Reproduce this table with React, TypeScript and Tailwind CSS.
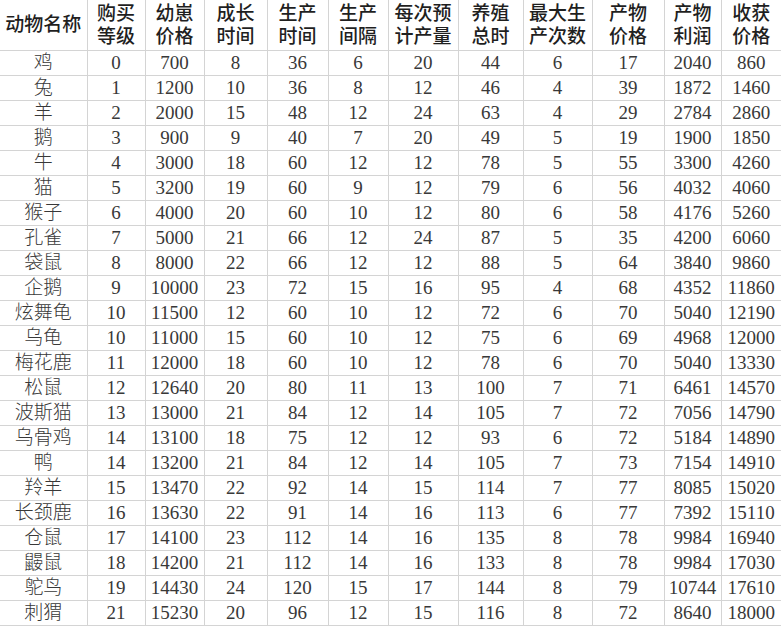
import React from 'react'

const colWidths = [87, 58, 59, 63, 61, 60, 70, 65, 69, 72, 57, 60]

const headers: string[][] = [
  ['动物名称'],
  ['购买', '等级'],
  ['幼崽', '价格'],
  ['成长', '时间'],
  ['生产', '时间'],
  ['生产', '间隔'],
  ['每次预', '计产量'],
  ['养殖', '总时'],
  ['最大生', '产次数'],
  ['产物', '价格'],
  ['产物', '利润'],
  ['收获', '价格'],
]

const rows: (string | number)[][] = [
  ['鸡', 0, 700, 8, 36, 6, 20, 44, 6, 17, 2040, 860],
  ['兔', 1, 1200, 10, 36, 8, 12, 46, 4, 39, 1872, 1460],
  ['羊', 2, 2000, 15, 48, 12, 24, 63, 4, 29, 2784, 2860],
  ['鹅', 3, 900, 9, 40, 7, 20, 49, 5, 19, 1900, 1850],
  ['牛', 4, 3000, 18, 60, 12, 12, 78, 5, 55, 3300, 4260],
  ['猫', 5, 3200, 19, 60, 9, 12, 79, 6, 56, 4032, 4060],
  ['猴子', 6, 4000, 20, 60, 10, 12, 80, 6, 58, 4176, 5260],
  ['孔雀', 7, 5000, 21, 66, 12, 24, 87, 5, 35, 4200, 6060],
  ['袋鼠', 8, 8000, 22, 66, 12, 12, 88, 5, 64, 3840, 9860],
  ['企鹅', 9, 10000, 23, 72, 15, 16, 95, 4, 68, 4352, 11860],
  ['炫舞龟', 10, 11500, 12, 60, 10, 12, 72, 6, 70, 5040, 12190],
  ['乌龟', 10, 11000, 15, 60, 10, 12, 75, 6, 69, 4968, 12000],
  ['梅花鹿', 11, 12000, 18, 60, 10, 12, 78, 6, 70, 5040, 13330],
  ['松鼠', 12, 12640, 20, 80, 11, 13, 100, 7, 71, 6461, 14570],
  ['波斯猫', 13, 13000, 21, 84, 12, 14, 105, 7, 72, 7056, 14790],
  ['乌骨鸡', 14, 13100, 18, 75, 12, 12, 93, 6, 72, 5184, 14890],
  ['鸭', 14, 13200, 21, 84, 12, 14, 105, 7, 73, 7154, 14910],
  ['羚羊', 15, 13470, 22, 92, 14, 15, 114, 7, 77, 8085, 15020],
  ['长颈鹿', 16, 13630, 22, 91, 14, 16, 113, 6, 77, 7392, 15110],
  ['仓鼠', 17, 14100, 23, 112, 14, 16, 135, 8, 78, 9984, 16940],
  ['鼹鼠', 18, 14200, 21, 112, 14, 16, 133, 8, 78, 9984, 17030],
  ['鸵鸟', 19, 14430, 24, 120, 15, 17, 144, 8, 79, 10744, 17610],
  ['刺猬', 21, 15230, 20, 96, 12, 15, 116, 8, 72, 8640, 18000],
]

export default function App() {
  return (
    <div className="w-[781px] h-[627px] bg-white overflow-hidden">
      <table className="table-fixed border-collapse w-[781px] font-['Liberation_Serif','Noto_Sans_CJK_SC',serif]">
        <colgroup>
          {colWidths.map((w, i) => (
            <col key={i} style={{ width: w }} />
          ))}
        </colgroup>
        <thead>
          <tr className="h-[50px]">
            {headers.map((h, i) => (
              <th
                key={i}
                className="p-0 border-b border-r last:border-r-0 border-[#d4d4d4] text-center align-middle font-['Liberation_Sans','Noto_Sans_CJK_SC',sans-serif] font-medium text-[19px] leading-[23px] text-[#1f1f1f] whitespace-nowrap"
              >
                {h.map((line, j) => (
                  <div key={j}>{line}</div>
                ))}
              </th>
            ))}
          </tr>
        </thead>
        <tbody>
          {rows.map((r, i) => (
            <tr key={i} className="h-[25px]">
              {r.map((v, j) => (
                <td
                  key={j}
                  className={`p-0 border-b border-r last:border-r-0 border-[#d4d4d4] text-center align-middle text-[19px] leading-[24px] text-[#383838] whitespace-nowrap ${
                    j === 0 ? 'font-light' : ''
                  }`}
                >
                  {v}
                </td>
              ))}
            </tr>
          ))}
        </tbody>
      </table>
    </div>
  )
}
